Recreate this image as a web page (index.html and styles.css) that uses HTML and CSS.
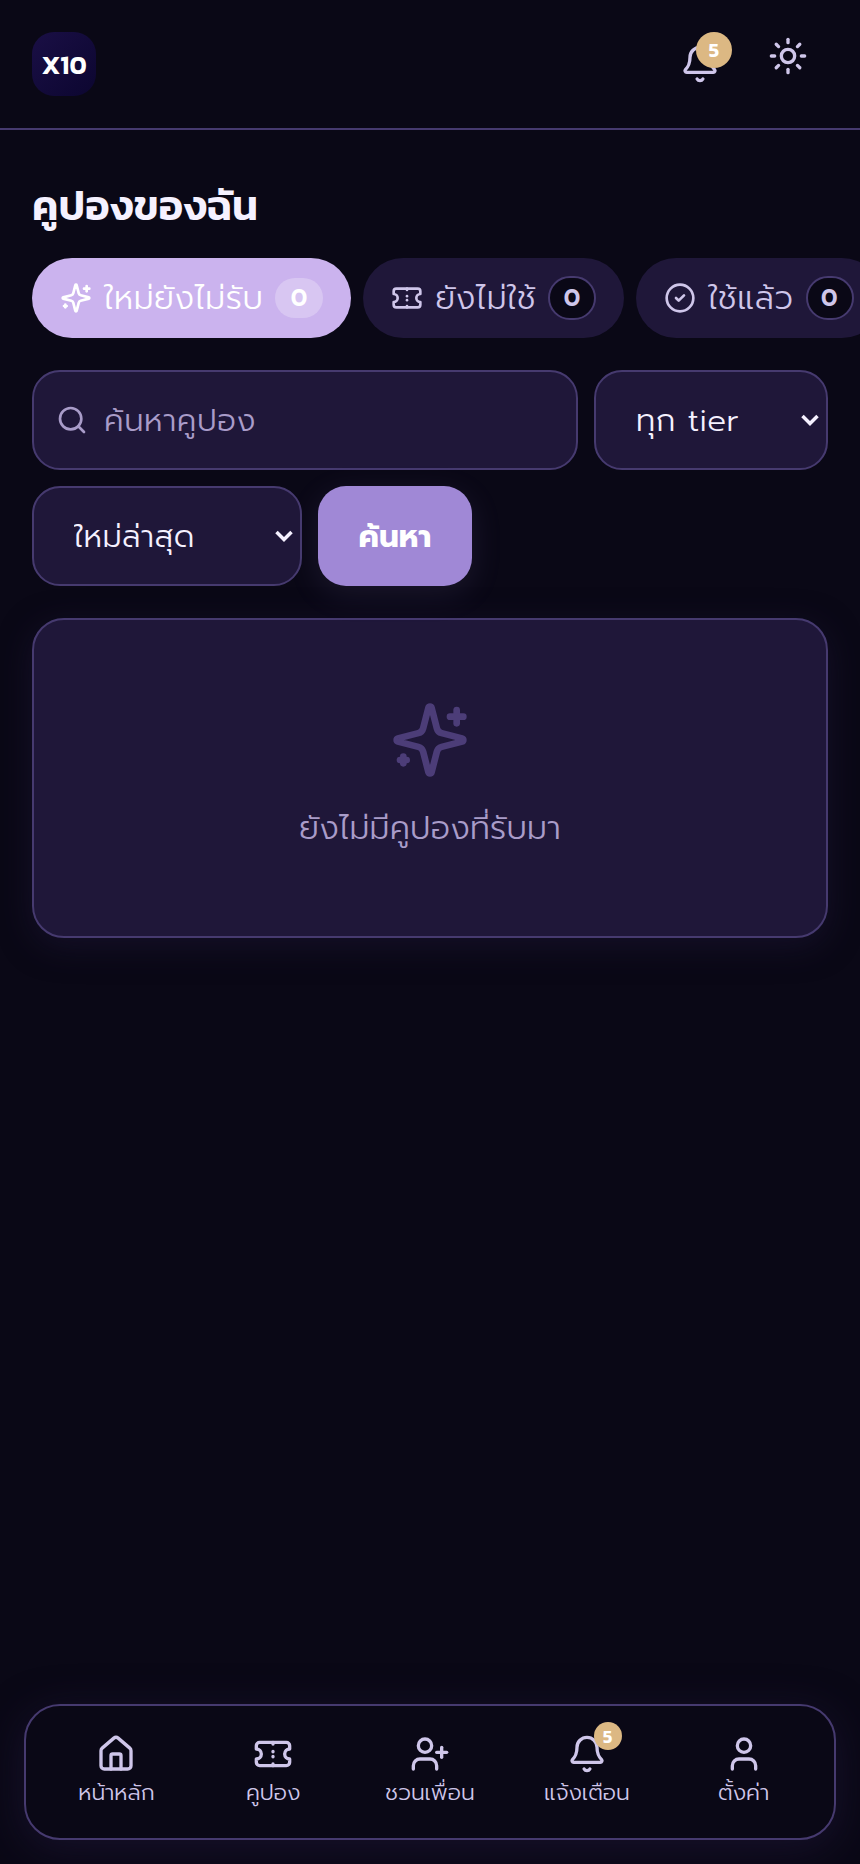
FILE: index.html
```html
<!DOCTYPE html>
<html lang="th">
<head>
    <meta charset="UTF-8">
    <meta name="viewport" content="width=device-width, initial-scale=1.0">
    <title>คูปองของฉัน</title>
    <link rel="stylesheet" href="styles.css">
</head>
<body>
    <svg class="sprite" aria-hidden="true">
        <symbol id="i-sparkles" viewBox="0 0 24 24"><path d="M9.937 15.5A2 2 0 0 0 8.5 14.063l-6.135-1.582a.5.5 0 0 1 0-.962L8.5 9.936A2 2 0 0 0 9.937 8.5l1.582-6.135a.5.5 0 0 1 .963 0L14.063 8.5A2 2 0 0 0 15.5 9.937l6.135 1.581a.5.5 0 0 1 0 .964L15.5 14.063a2 2 0 0 0-1.437 1.437l-1.582 6.135a.5.5 0 0 1-.963 0z"/><path d="M20 3v4"/><path d="M22 5h-4"/><path d="M4 17v2"/><path d="M5 18H3"/></symbol>
        <symbol id="i-ticket" viewBox="0 0 24 24"><path d="M2 9a3 3 0 0 1 0 6v2a2 2 0 0 0 2 2h16a2 2 0 0 0 2-2v-2a3 3 0 0 1 0-6V7a2 2 0 0 0-2-2H4a2 2 0 0 0-2 2Z"/><path d="M12 5v1"/><path d="M12 10.5v.2"/><path d="M12 13.5v.2"/><path d="M12 18v1"/></symbol>
        <symbol id="i-check" viewBox="0 0 24 24"><circle cx="12" cy="12" r="10"/><path d="m9 12 2 2 4-4"/></symbol>
        <symbol id="i-search" viewBox="0 0 24 24"><circle cx="11" cy="11" r="8"/><path d="m21 21-4.3-4.3"/></symbol>
        <symbol id="i-bell" viewBox="0 0 24 24"><path d="M10.268 21a2 2 0 0 0 3.464 0"/><path d="M3.262 15.326A1 1 0 0 0 4 17h16a1 1 0 0 0 .74-1.673C19.41 13.956 18 12.499 18 8A6 6 0 0 0 6 8c0 4.499-1.411 5.956-2.738 7.326"/></symbol>
        <symbol id="i-sun" viewBox="0 0 24 24"><circle cx="12" cy="12" r="4"/><path d="M12 2v2"/><path d="M12 20v2"/><path d="m4.93 4.93 1.41 1.41"/><path d="m17.66 17.66 1.41 1.41"/><path d="M2 12h2"/><path d="M20 12h2"/><path d="m6.34 17.66-1.41 1.41"/><path d="m19.07 4.93-1.41 1.41"/></symbol>
        <symbol id="i-home" viewBox="0 0 24 24"><path d="M15 21v-8a1 1 0 0 0-1-1h-4a1 1 0 0 0-1 1v8"/><path d="M3 10a2 2 0 0 1 .709-1.528l7-6a2 2 0 0 1 2.582 0l7 6A2 2 0 0 1 21 10v9a2 2 0 0 1-2 2H5a2 2 0 0 1-2-2z"/></symbol>
        <symbol id="i-user-plus" viewBox="0 0 24 24"><path d="M16 21v-2a4 4 0 0 0-4-4H6a4 4 0 0 0-4 4v2"/><circle cx="9" cy="7" r="4"/><path d="M19 8v6"/><path d="M22 11h-6"/></symbol>
        <symbol id="i-user" viewBox="0 0 24 24"><path d="M19 21v-2a4 4 0 0 0-4-4H9a4 4 0 0 0-4 4v2"/><circle cx="12" cy="7" r="4"/></symbol>
        <symbol id="i-chevron" viewBox="0 0 18 12"><path d="M1.5 2l7.5 7.5 7.5-7.5"/></symbol>
    </svg>

    <header class="topbar">
        <div class="logo">X10</div>
        <div class="top-actions">
            <button class="icon-btn bell-btn">
                <svg class="icon icon-40"><use href="#i-bell"/></svg>
                <span class="badge badge-top">5</span>
            </button>
            <button class="icon-btn sun-btn">
                <svg class="icon icon-40"><use href="#i-sun"/></svg>
            </button>
        </div>
    </header>

    <main class="content">
        <h1 class="title">คูปองของฉัน</h1>

        <div class="tabs">
            <button class="tab active">
                <svg class="icon icon-32"><use href="#i-sparkles"/></svg>
                <span>ใหม่ยังไม่รับ</span>
                <span class="count">0</span>
            </button>
            <button class="tab">
                <svg class="icon icon-32"><use href="#i-ticket"/></svg>
                <span>ยังไม่ใช้</span>
                <span class="count">0</span>
            </button>
            <button class="tab">
                <svg class="icon icon-32"><use href="#i-check"/></svg>
                <span>ใช้แล้ว</span>
                <span class="count">0</span>
            </button>
        </div>

        <form class="filters">
            <label class="search">
                <svg class="icon icon-32"><use href="#i-search"/></svg>
                <input type="text" placeholder="ค้นหาคูปอง">
            </label>
            <div class="select-wrap select-tier">
                <select class="select">
                    <option>ทุก tier</option>
                </select>
                <svg class="chevron"><use href="#i-chevron"/></svg>
            </div>
            <div class="select-wrap select-sort">
                <select class="select">
                    <option>ใหม่ล่าสุด</option>
                </select>
                <svg class="chevron"><use href="#i-chevron"/></svg>
            </div>
            <button class="search-btn" type="button">ค้นหา</button>
        </form>

        <section class="empty">
            <svg class="icon empty-icon"><use href="#i-sparkles"/></svg>
            <p>ยังไม่มีคูปองที่รับมา</p>
        </section>
    </main>

    <nav class="bottom-nav">
        <a class="nav-item">
            <svg class="icon icon-40"><use href="#i-home"/></svg>
            <span>หน้าหลัก</span>
        </a>
        <a class="nav-item">
            <svg class="icon icon-40"><use href="#i-ticket"/></svg>
            <span>คูปอง</span>
        </a>
        <a class="nav-item">
            <svg class="icon icon-40"><use href="#i-user-plus"/></svg>
            <span>ชวนเพื่อน</span>
        </a>
        <a class="nav-item">
            <span class="nav-icon">
                <svg class="icon icon-40"><use href="#i-bell"/></svg>
                <span class="badge badge-nav">5</span>
            </span>
            <span>แจ้งเตือน</span>
        </a>
        <a class="nav-item">
            <svg class="icon icon-40"><use href="#i-user"/></svg>
            <span>ตั้งค่า</span>
        </a>
    </nav>
</body>
</html>
```

FILE: styles.css
```css
* {
    box-sizing: border-box;
}

body {
    margin: 0;
    min-height: 100vh;
    display: flex;
    flex-direction: column;
    overflow: hidden;
    background-color: #0a0816;
    color: #f5f1ff;
    font-family: "Prompt", "Noto Sans Thai", sans-serif;
    font-weight: 300;
}

.sprite {
    display: none;
}

.icon {
    display: block;
    flex: none;
    fill: none;
    stroke: currentColor;
    stroke-width: 2;
    stroke-linecap: round;
    stroke-linejoin: round;
}

.icon-32 {
    width: 32px;
    height: 32px;
}

.icon-40 {
    width: 40px;
    height: 40px;
}

/* top bar */
.topbar {
    height: 130px;
    padding: 32px;
    display: flex;
    justify-content: space-between;
    border-bottom: 2px solid #463a6f;
}

.logo {
    width: 64px;
    height: 64px;
    border-radius: 22px;
    background: linear-gradient(135deg, #1a0f45, #0c0630);
    color: #fff;
    font-family: "Kanit", "Prompt", sans-serif;
    font-weight: 600;
    font-size: 26px;
    display: flex;
    align-items: center;
    justify-content: center;
}

.top-actions {
    display: flex;
    align-items: flex-start;
    gap: 48px;
    margin-right: 20px;
}

.icon-btn {
    position: relative;
    padding: 0;
    border: none;
    background: none;
    color: #cfc6ea;
}

.bell-btn {
    margin-top: 12px;
}

.sun-btn {
    margin-top: 4px;
}

.badge {
    position: absolute;
    display: flex;
    align-items: center;
    justify-content: center;
    border-radius: 50%;
    background-color: #dcb883;
    color: #fff;
    font-family: "Kanit", "Prompt", sans-serif;
    font-weight: 600;
}

.badge-top {
    top: -12px;
    right: -12px;
    width: 36px;
    height: 36px;
    font-size: 20px;
}

.badge-nav {
    top: -12px;
    right: -15px;
    width: 28px;
    height: 28px;
    font-size: 18px;
}

/* main */
.content {
    flex: 1;
    padding: 51px 32px 0;
}

.title {
    margin: 0 0 29px;
    font-family: "Kanit", "Prompt", sans-serif;
    font-size: 41.6px;
    line-height: 48px;
    font-weight: 600;
}

.tabs {
    display: flex;
    gap: 12px;
    margin-right: -60px;
    margin-bottom: 32px;
}

.tab {
    flex: none;
    height: 80px;
    padding: 0 28px;
    display: flex;
    align-items: center;
    gap: 12px;
    border: none;
    border-radius: 40px;
    background-color: #1f1739;
    color: #cfc6ea;
    font-family: inherit;
    font-weight: 300;
    font-size: 32px;
    letter-spacing: 0.55px;
}

.tab.active {
    background-color: #cbb3ee;
    color: #fff;
}

.count {
    width: 48px;
    height: 44px;
    display: flex;
    align-items: center;
    justify-content: center;
    border: 2px solid #463a6f;
    border-radius: 22px;
    background-color: #0a0816;
    font-size: 24px;
    font-weight: 600;
}

.active .count {
    height: 40px;
    border: none;
    background-color: rgba(255, 255, 255, 0.25);
}

.filters {
    display: flex;
    flex-wrap: wrap;
    gap: 16px;
    margin-bottom: 32px;
}

.search {
    width: 546px;
    height: 100px;
    padding: 0 22px;
    display: flex;
    align-items: center;
    gap: 16px;
    border: 2px solid #463a6f;
    border-radius: 28px;
    background-color: #1f1739;
    color: #a99cc9;
}

.search input {
    flex: 1;
    min-width: 0;
    border: none;
    outline: none;
    padding: 0;
    background: none;
    color: #fff;
    font-family: inherit;
    font-weight: 300;
    font-size: 31px;
    letter-spacing: 0.6px;
}

.search input::placeholder {
    color: #a99cc9;
}

.select-wrap {
    position: relative;
}

.select-tier {
    width: 234px;
}

.select-sort {
    width: 270px;
}

.select {
    width: 100%;
    height: 100px;
    padding: 0 0 0 40px;
    appearance: none;
    border: 2px solid #463a6f;
    border-radius: 28px;
    background-color: #1f1739;
    color: #f5f1ff;
    font-family: inherit;
    font-weight: 300;
    font-size: 31px;
    letter-spacing: 0.4px;
}

.chevron {
    position: absolute;
    top: 44px;
    right: 9px;
    width: 18px;
    height: 12px;
    fill: none;
    stroke: #f5f1ff;
    stroke-width: 3.5;
}

.search-btn {
    width: 154px;
    height: 100px;
    border: none;
    border-radius: 28px;
    background-color: #a088d6;
    color: #fff;
    font-family: inherit;
    font-size: 31px;
    font-weight: 700;
    box-shadow: 0 8px 32px rgba(160, 136, 214, 0.12);
}

.empty {
    height: 320px;
    padding-top: 80px;
    display: flex;
    flex-direction: column;
    align-items: center;
    border: 2px solid #463a6f;
    border-radius: 32px;
    background-color: #1f1739;
    box-shadow: 0 8px 32px rgba(31, 23, 57, 0.5);
}

.empty-icon {
    width: 80px;
    height: 80px;
    color: #4c3d78;
}

.empty p {
    margin: 24px 0 0;
    font-size: 32px;
    letter-spacing: 0.25px;
    color: #a99cc9;
}

/* bottom nav */
.bottom-nav {
    height: 136px;
    margin: 0 24px 24px;
    padding: 28px 12px 0;
    display: grid;
    grid-template-columns: repeat(5, 1fr);
    border: 2px solid #463a6f;
    border-radius: 36px;
    background-color: #0a0816;
    box-shadow: 0 8px 40px rgba(31, 23, 57, 0.6);
}

.nav-item {
    display: flex;
    flex-direction: column;
    align-items: center;
    gap: 2px;
    color: #cfc6ea;
    font-size: 22px;
}

.nav-icon {
    position: relative;
    display: block;
}
```
